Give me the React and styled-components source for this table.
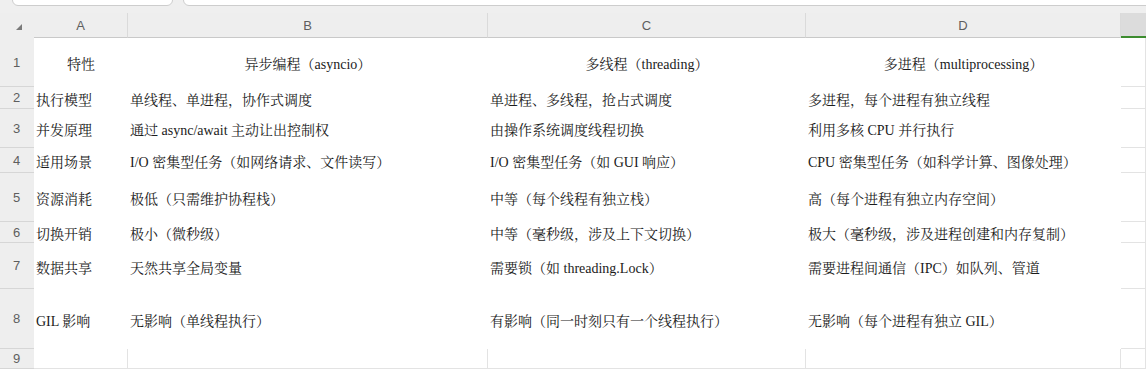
import React from "react";
import styled, { createGlobalStyle } from "styled-components";

const GlobalStyle = createGlobalStyle`
  html, body {
    margin: 0;
    padding: 0;
    background: #ffffff;
  }
  body {
    width: 1146px;
    height: 371px;
    overflow: hidden;
  }
`;

const Page = styled.div`
  display: flex;
  flex-direction: column;
  width: 1146px;
  background: #efefef;
`;

const Toolbar = styled.div`
  display: flex;
  align-items: flex-end;
  gap: 10px;
  height: 13px;
  padding: 0 0 7px 12px;
  box-sizing: border-box;
  overflow: hidden;
  background: #efefef;
`;

const Field = styled.div`
  flex: ${(p) => (p.$grow ? "1 0 auto" : "0 0 auto")};
  width: ${(p) => (p.$grow ? "auto" : "161px")};
  height: 30px;
  margin-right: ${(p) => (p.$grow ? "-20px" : "0")};
  background: #ffffff;
  border: 1px solid #cdcdcd;
  border-radius: 6px;
  box-sizing: border-box;
`;

const Sheet = styled.div`
  display: grid;
  grid-template-columns: 34px 94px 360px 318px 315px 1fr;
  grid-template-rows: 25px 49px 22px 39px 25px 49px 21px 46px 60px 20px 4px;
  background: #ffffff;
`;

const Corner = styled.div`
  display: flex;
  align-items: center;
  justify-content: flex-start;
  background: #eeeeee;
  padding: 3px 0 0 16px;
`;

const ColHead = styled.div`
  display: flex;
  align-items: center;
  justify-content: center;
  background: ${(p) => (p.$selected ? "#dcdcdc" : "#eeeeee")};
  border-right: ${(p) => (p.$selected ? "none" : "1px solid #dadada")};
  border-bottom: ${(p) => (p.$selected ? "2px solid #3d8c2f" : "1px solid #c9c9c9")};
  box-sizing: border-box;
  font-family: "Liberation Sans", Arial, sans-serif;
  font-size: 13px;
  color: #5e5e5e;
`;

const RowHead = styled.div`
  display: flex;
  align-items: center;
  justify-content: center;
  padding-right: 1px;
  background: #eeeeee;
  border-bottom: 1px solid #d6d6d6;
  box-sizing: border-box;
  font-family: "Liberation Sans", Arial, sans-serif;
  font-size: 13px;
  color: #5e5e5e;
`;

const Cell = styled.div`
  display: flex;
  align-items: center;
  justify-content: ${(p) => (p.$center ? "center" : "flex-start")};
  padding: ${(p) => (p.$center ? "1px 0 0 0" : "1px 0 0 2px")};
  box-sizing: border-box;
  white-space: nowrap;
  overflow: visible;
  border-right: ${(p) => (p.$grid ? "1px solid #e3e3e3" : "none")};
  border-bottom: ${(p) => (p.$grid ? "1px solid #e3e3e3" : "none")};
  font-family: "Liberation Serif", "Noto Serif CJK SC", "Noto Sans CJK SC", serif;
  font-size: 14px;
  color: #1b1b1b;
`;

const Filler = styled.div`
  grid-column: 1 / -1;
  background: #ffffff;
`;

const columns = ["A", "B", "C", "D"];

const rows = [
  ["特性", "异步编程（asyncio）", "多线程（threading）", "多进程（multiprocessing）"],
  ["执行模型", "单线程、单进程，协作式调度", "单进程、多线程，抢占式调度", "多进程，每个进程有独立线程"],
  ["并发原理", "通过 async/await 主动让出控制权", "由操作系统调度线程切换", "利用多核 CPU 并行执行"],
  ["适用场景", "I/O 密集型任务（如网络请求、文件读写）", "I/O 密集型任务（如 GUI 响应）", "CPU 密集型任务（如科学计算、图像处理）"],
  ["资源消耗", "极低（只需维护协程栈）", "中等（每个线程有独立栈）", "高（每个进程有独立内存空间）"],
  ["切换开销", "极小（微秒级）", "中等（毫秒级，涉及上下文切换）", "极大（毫秒级，涉及进程创建和内存复制）"],
  ["数据共享", "天然共享全局变量", "需要锁（如 threading.Lock）", "需要进程间通信（IPC）如队列、管道"],
  ["GIL 影响", "无影响（单线程执行）", "有影响（同一时刻只有一个线程执行）", "无影响（每个进程有独立 GIL）"],
];

const SelectAll = () => (
  <svg width="6" height="6" viewBox="0 0 6 6">
    <polygon points="6,0 6,6 0,6" fill="#7a7a7a" />
  </svg>
);

const App = () => {
  return (
    <Page>
      <GlobalStyle />
      <Toolbar>
        <Field />
        <Field $grow />
      </Toolbar>
      <Sheet>
        <Corner>
          <SelectAll />
        </Corner>
        {columns.map((c) => (
          <ColHead key={c}>{c}</ColHead>
        ))}
        <ColHead $selected />

        {rows.map((row, i) => (
          <React.Fragment key={i}>
            <RowHead>{i + 1}</RowHead>
            {row.map((text, j) => (
              <Cell key={j} $center={i === 0}>
                {text}
              </Cell>
            ))}
            <Cell $grid />
          </React.Fragment>
        ))}

        <RowHead>9</RowHead>
        {columns.map((c) => (
          <Cell key={c} $grid />
        ))}
        <Cell $grid />
        <Filler />
      </Sheet>
    </Page>
  );
};

export default App;
